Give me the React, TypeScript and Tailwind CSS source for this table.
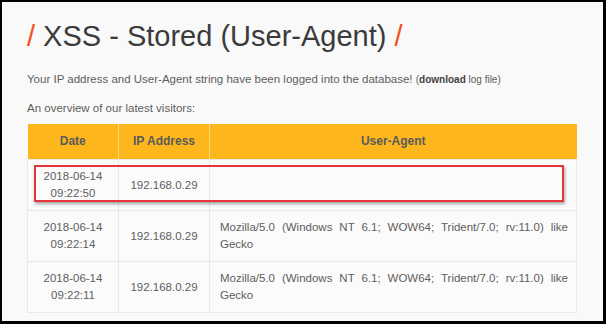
import React from 'react';

const font = { fontFamily: '"Liberation Sans", Arial, sans-serif' };

const visitors = [
  { date: '2018-06-14', time: '09:22:50', ip: '192.168.0.29', agent: '' },
  {
    date: '2018-06-14',
    time: '09:22:14',
    ip: '192.168.0.29',
    agent: 'Mozilla/5.0 (Windows NT 6.1; WOW64; Trident/7.0; rv:11.0) like Gecko',
  },
  {
    date: '2018-06-14',
    time: '09:22:11',
    ip: '192.168.0.29',
    agent: 'Mozilla/5.0 (Windows NT 6.1; WOW64; Trident/7.0; rv:11.0) like Gecko',
  },
];

export default function App() {
  return (
    <div className="w-[606px] h-[324px] bg-black pt-[2px] pl-[2px] pr-[3px] pb-[3px]" style={font}>
      <div className="h-full bg-[#f9f9f9] pl-[25px] pr-[23px] pt-[18px] overflow-hidden">
        {/* title */}
        <h1 className="text-[29px] leading-[32px] text-[#3b3b3b] font-normal whitespace-nowrap">
          <span className="text-[#f2501d]">/</span> XSS - Stored (User-Agent){' '}
          <span className="text-[#f2501d]">/</span>
        </h1>

        <p className="mt-[19px] text-[11.5px] leading-[16px] text-[#5e5e5e] whitespace-nowrap">
          Your IP address and User-Agent string have been logged into the database!{' '}
          <span className="text-[10px]">
            (<a className="font-bold text-[#444]">download</a> log file)
          </span>
        </p>

        <p className="mt-[12px] text-[11.5px] leading-[16px] text-[#5e5e5e]">
          An overview of our latest visitors:
        </p>

        {/* visitors table */}
        <div className="relative mt-[8px] w-[550px]">
          <table className="w-full border-collapse text-[11.5px] leading-[17px] text-[#5e5e5e]">
            <thead>
              <tr className="bg-[#fdb71c] text-[12px] font-bold text-[#5a5a5a]">
                <th className="w-[91px] py-[9px] border-r border-[#fcd77f]">Date</th>
                <th className="w-[91px] py-[9px] border-r border-[#fcd77f]">IP Address</th>
                <th className="py-[9px]">User-Agent</th>
              </tr>
            </thead>
            <tbody className="bg-[#fbfbfb]">
              {visitors.map((v, i) => (
                <tr key={i} className="border border-[#e9e9e9]">
                  <td className="text-center py-[8px] border-r border-[#e9e9e9]">
                    {v.date}
                    <br />
                    {v.time}
                  </td>
                  <td className="text-center py-[8px] border-r border-[#e9e9e9]">{v.ip}</td>
                  <td className="pl-[10px] pr-[8px] py-[8px] text-justify">{v.agent}</td>
                </tr>
              ))}
            </tbody>
          </table>

          {/* highlight box */}
          <div className="absolute left-[7px] top-[41px] w-[530px] h-[37px] border-2 border-[#e8353d] shadow-[1px_2px_3px_rgba(0,0,0,0.35)]" />
        </div>
      </div>
    </div>
  );
}
